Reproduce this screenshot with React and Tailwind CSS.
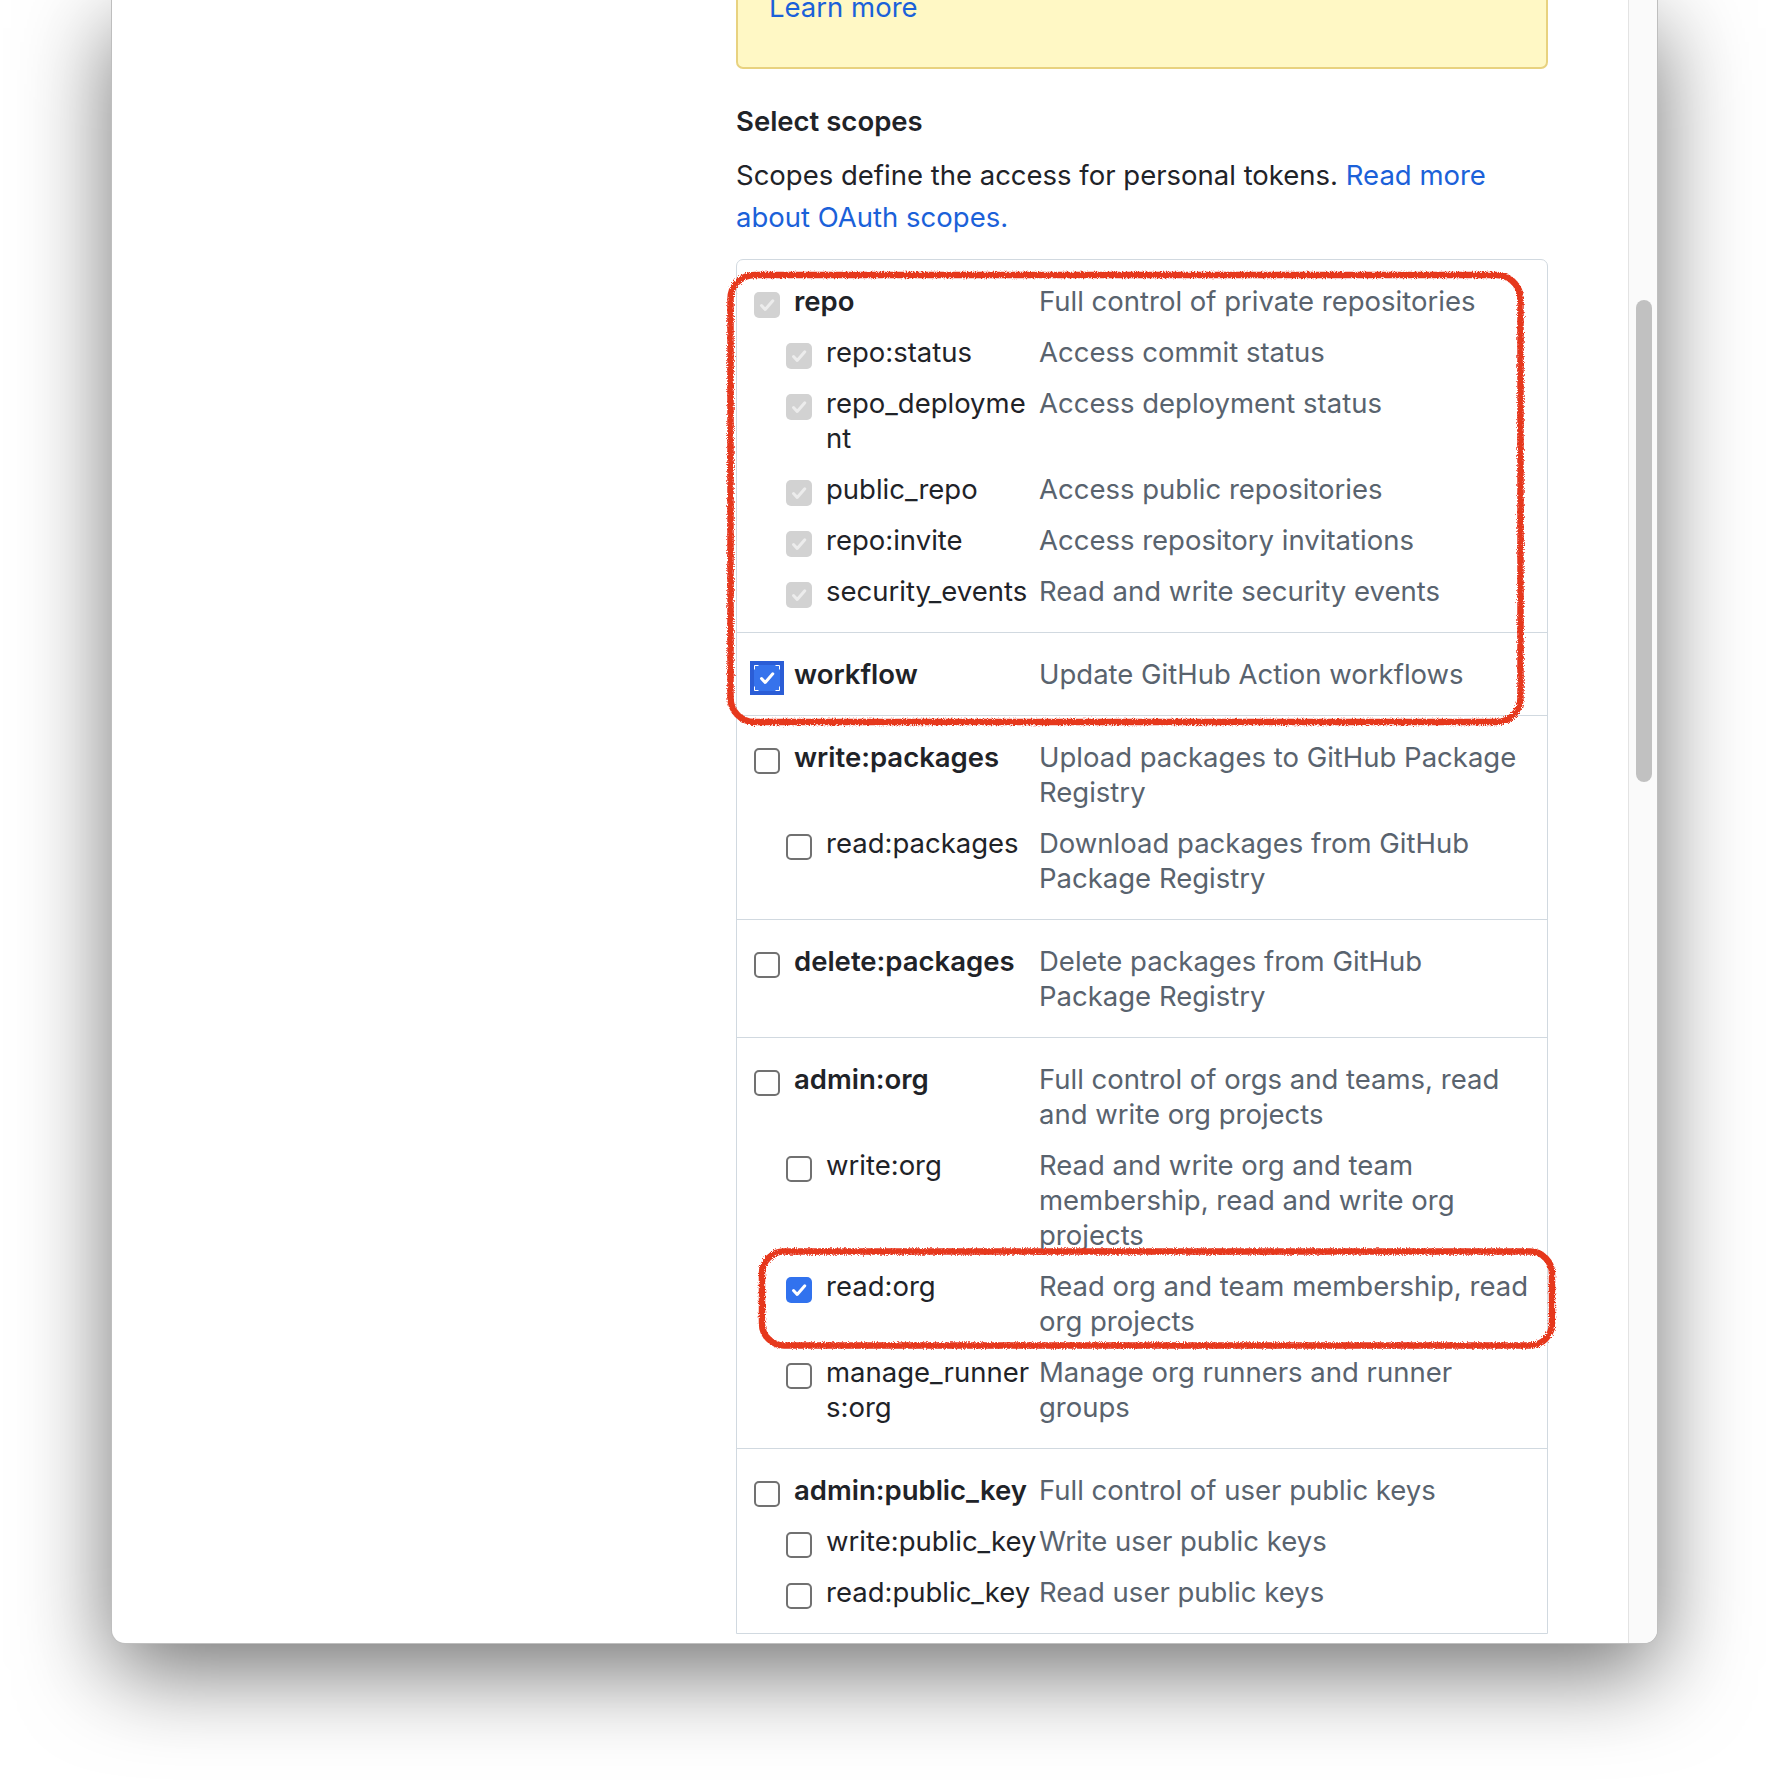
import React from "react";
import clsx from "clsx";

const FONT = "font-['Inter','Noto_Sans',sans-serif]";

const groups = [
  [
    { name: ["repo"], top: true, state: "disabled", desc: ["Full control of private repositories"] },
    { name: ["repo:status"], state: "disabled", desc: ["Access commit status"] },
    { name: ["repo_deployme", "nt"], state: "disabled", desc: ["Access deployment status"] },
    { name: ["public_repo"], state: "disabled", desc: ["Access public repositories"] },
    { name: ["repo:invite"], state: "disabled", desc: ["Access repository invitations"] },
    { name: ["security_events"], state: "disabled", desc: ["Read and write security events"] },
  ],
  [{ name: ["workflow"], top: true, state: "focused", desc: ["Update GitHub Action workflows"] }],
  [
    { name: ["write:packages"], top: true, state: "off", desc: ["Upload packages to GitHub Package", "Registry"] },
    { name: ["read:packages"], state: "off", desc: ["Download packages from GitHub", "Package Registry"] },
  ],
  [{ name: ["delete:packages"], top: true, state: "off", desc: ["Delete packages from GitHub", "Package Registry"] }],
  [
    { name: ["admin:org"], top: true, state: "off", desc: ["Full control of orgs and teams, read", "and write org projects"] },
    { name: ["write:org"], state: "off", desc: ["Read and write org and team", "membership, read and write org", "projects"] },
    { name: ["read:org"], state: "on", desc: ["Read org and team membership, read", "org projects"] },
    { name: ["manage_runner", "s:org"], state: "off", desc: ["Manage org runners and runner", "groups"] },
  ],
  [
    { name: ["admin:public_key"], top: true, state: "off", desc: ["Full control of user public keys"] },
    { name: ["write:public_key"], state: "off", desc: ["Write user public keys"] },
    { name: ["read:public_key"], state: "off", desc: ["Read user public keys"] },
  ],
];

const Check = ({ color }) => (
  <svg width="26" height="26" viewBox="0 0 26 26" className="block">
    <polyline
      points="7.5,13.5 11.2,17.5 18.8,8.8"
      fill="none"
      stroke={color}
      strokeWidth="3"
      strokeLinecap="round"
      strokeLinejoin="round"
    />
  </svg>
);

const Checkbox = ({ state }) => {
  if (state === "disabled") {
    return (
      <div className="w-[26px] h-[26px] rounded-[5px] bg-[#d2d2d2]">
        <Check color="#ececec" />
      </div>
    );
  }
  if (state === "on") {
    return (
      <div className="w-[26px] h-[26px] rounded-[5px] bg-[#3172ee]">
        <Check color="#ffffff" />
      </div>
    );
  }
  if (state === "focused") {
    return (
      <svg width="34" height="34" viewBox="0 0 34 34" className="block -m-[4px]">
        <rect x="0" y="0" width="34" height="34" fill="#2b5dd6" />
        <rect x="4" y="4" width="26" height="26" fill="#3673ec" />
        <path
          d="M4.5 8.5V4.5H8.5M25.5 4.5H29.5V8.5M29.5 25.5V29.5H25.5M8.5 29.5H4.5V25.5"
          fill="none"
          stroke="#ffffff"
          strokeWidth="1"
        />
        <polyline
          points="11.5,17.5 15.2,21.5 22.8,12.8"
          fill="none"
          stroke="#ffffff"
          strokeWidth="3"
          strokeLinecap="round"
          strokeLinejoin="round"
        />
      </svg>
    );
  }
  return <div className="w-[26px] h-[26px] rounded-[5px] border-2 border-[#717171] bg-white" />;
};

const ScopeRow = ({ scope }) => (
  <div className="flex">
    <div className={clsx("flex w-[285px] shrink-0", !scope.top && "pl-[32px]")}>
      <div className="mt-[8px] shrink-0">
        <Checkbox state={scope.state} />
      </div>
      <div
        className={clsx(
          "ml-[14px] whitespace-nowrap text-[#1f2328]",
          scope.top && "font-semibold"
        )}
      >
        {scope.name.map((line) => (
          <div key={line}>{line}</div>
        ))}
      </div>
    </div>
    <div className="text-[#59636e] whitespace-nowrap">
      {scope.desc.map((line) => (
        <div key={line}>{line}</div>
      ))}
    </div>
  </div>
);

const Annotations = () => (
  <svg
    className="absolute inset-0 pointer-events-none"
    width="1770"
    height="1792"
    viewBox="0 0 1770 1792"
  >
    <defs>
      <filter id="rough" x="-5%" y="-5%" width="110%" height="110%">
        <feTurbulence type="fractalNoise" baseFrequency="0.9" numOctaves="2" seed="4" />
        <feDisplacementMap in="SourceGraphic" scale="4.5" />
      </filter>
    </defs>
    <g filter="url(#rough)" fill="none" stroke="#e6371f">
      <rect x="730.5" y="275" width="790" height="447" rx="24" strokeWidth="6.5" />
      <rect x="762" y="1251.5" width="790" height="94" rx="22" strokeWidth="6.5" />
    </g>
  </svg>
);

export default function App() {
  return (
    <div className={clsx("relative w-[1770px] h-[1792px] bg-white overflow-hidden", FONT)}>
      <div className="ml-[111px] w-[1547px] h-[1644px] flex bg-white border border-t-0 border-black/25 rounded-b-[14px] overflow-hidden shadow-[0_28px_90px_rgba(0,0,0,0.55)]">
        <div className="w-[624px] shrink-0" />

        <div className="w-[812px] shrink-0 text-[27.5px]">
          <div className="-mt-[40px] border-2 border-[#e8d27f] bg-[#fff8c5] rounded-[7px] pl-[31px] pt-[25px] pb-[39px] leading-[41px]">
            <span className="text-[#1b61d9]">Learn more</span>
          </div>

          <h3 className="mt-[32px] font-semibold leading-[41px] text-[#1f2328]">Select scopes</h3>

          <p className="mt-[13px] leading-[41.5px] text-[#1f2328]">
            Scopes define the access for personal tokens.{" "}
            <span className="text-[#1b61d9]">Read more</span>
            <br />
            <span className="text-[#1b61d9]">about OAuth scopes.</span>
          </p>

          <div className="mt-[21px] border border-[#d1d9e0] rounded-t-[7px] leading-[35px]">
            {groups.map((group, i) => (
              <div
                key={i}
                className={clsx(
                  "flex flex-col gap-[16px] pl-[17px] pt-[24px] pb-[23px]",
                  i > 0 && "border-t border-[#d1d9e0]"
                )}
              >
                {group.map((scope) => (
                  <ScopeRow key={scope.name.join("")} scope={scope} />
                ))}
              </div>
            ))}
          </div>
        </div>

        <div className="w-[80px] shrink-0" />

        <div className="w-[29px] shrink-0 bg-[#fafafa] border-l border-[#e3e3e3]">
          <div className="ml-[7px] mt-[300px] w-[16px] h-[482px] rounded-full bg-[#c1c1c1]" />
        </div>
      </div>

      <Annotations />
    </div>
  );
}
